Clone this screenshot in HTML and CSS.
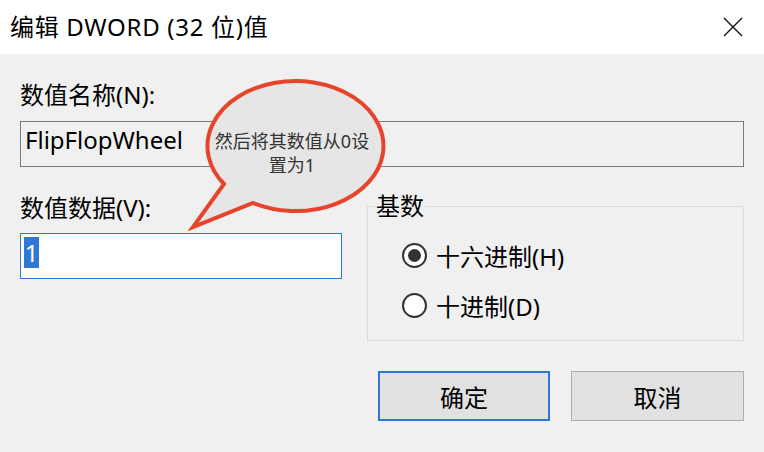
FILE: index.html
```html
<!DOCTYPE html>
<html lang="zh-CN">
<head>
  <meta charset="UTF-8" />
  <title>编辑 DWORD (32 位)值</title>
  <link rel="stylesheet" href="styles.css">
</head>
<body>
  <div class="dialog">
    <div class="titlebar">
      <span class="title">编辑 DWORD (32 位)值</span>
      <svg class="close" width="20" height="20" viewBox="0 0 20 20">
        <path d="M1 1L19 19M19 1L1 19" />
      </svg>
    </div>

    <div class="body">
      <div class="label name-label">数值名称(N):</div>
      <div class="textbox readonly">FlipFlopWheel</div>

      <div class="data-row">
        <div class="data-col">
          <div class="label data-label">数值数据(V):</div>
          <div class="textbox focused"><span class="sel">1</span></div>
        </div>
        <fieldset class="base">
          <legend>基数</legend>
          <div class="radio-list">
            <label class="radio"><span class="dot checked"></span>十六进制(H)</label>
            <label class="radio"><span class="dot"></span>十进制(D)</label>
          </div>
        </fieldset>
      </div>

      <div class="buttons">
        <button class="btn default">确定</button>
        <button class="btn cancel">取消</button>
      </div>
    </div>

    <!-- speech bubble note on top of the dialog -->
    <svg class="bubble" width="210" height="160" viewBox="0 0 210 160">
      <path d="M39 109 A88 65 0 1 1 68 128 L8 152 Z" />
    </svg>
    <div class="bubble-text">然后将其数值从0设<br>置为1</div>
  </div>
</body>
</html>
```

FILE: styles.css
```css
body {
  margin: 0;
  padding: 0;
  background-color: #f0f0f0;
  font-family: "Noto Sans", "Noto Sans CJK SC", sans-serif;
  color: #000;
}
.dialog {
  position: relative;
  width: 764px;
  height: 452px;
  overflow: hidden;
}
.titlebar {
  height: 54px;
  background-color: #fff;
  display: flex;
  align-items: center;
  justify-content: space-between;
  padding: 0 21px 0 10px;
}
.title {
  font-size: 24px;
  line-height: 32px;
  letter-spacing: 0.7px;
}
.close path {
  stroke: #111;
  stroke-width: 1.4;
  fill: none;
}
.body {
  padding: 25px 20px 0 20px;
}
.label {
  font-size: 24px;
  line-height: 32px;
}
.name-label {
  margin-bottom: 10px;
}
.data-label {
  margin-bottom: 9px;
}
.textbox {
  box-sizing: border-box;
  height: 46px;
  font-size: 24px;
  border: 1px solid #7a7a7a;
}
.readonly {
  background-color: #f0f0f0;
  padding-left: 4px;
  line-height: 36px;
}
.focused {
  background-color: #fff;
  border-color: #2f78d8;
  padding: 2px 0 0 3px;
}
.sel {
  display: inline-block;
  width: 15px;
  height: 31px;
  line-height: 31px;
  text-align: center;
  background-color: #2f78d8;
  color: #fff;
}
.data-row {
  display: flex;
  margin-top: 25px;
}
.data-col {
  width: 322px;
}
.base {
  flex: 1;
  margin: 0 0 0 25px;
  padding: 0 0 10px 7px;
  border: 1px solid #dcdcdc;
  min-width: 0;
}
.base legend {
  padding: 0 1px;
  font-size: 24px;
  line-height: 28px;
}
.radio-list {
  display: flex;
  flex-direction: column;
  padding: 10px 0 0 27px;
}
.radio {
  height: 50px;
  display: flex;
  align-items: center;
  gap: 9px;
  font-size: 24px;
}
.dot {
  box-sizing: border-box;
  width: 25px;
  height: 25px;
  border: 2px solid #333;
  border-radius: 50%;
  background-color: #fff;
  display: flex;
  align-items: center;
  justify-content: center;
}
.dot.checked::after {
  content: "";
  width: 13px;
  height: 13px;
  border-radius: 50%;
  background-color: #333;
}
.buttons {
  display: flex;
  justify-content: flex-end;
  gap: 21px;
  margin-top: 30px;
}
.btn {
  box-sizing: border-box;
  height: 50px;
  background-color: #e1e1e1;
  font-family: inherit;
  font-size: 24px;
  color: #000;
  padding: 0;
}
.default {
  width: 172px;
  border: 2px solid #2f78d8;
}
.cancel {
  width: 173px;
  border: 1px solid #adadad;
}
.bubble {
  position: absolute;
  left: 185px;
  top: 75px;
}
.bubble path {
  fill: #e6e6e6;
  stroke: #e8442b;
  stroke-width: 4;
  stroke-linejoin: miter;
}
.bubble-text {
  position: absolute;
  left: 203px;
  top: 129px;
  width: 178px;
  text-align: center;
  font-size: 18px;
  line-height: 24px;
  color: #333;
}
```
